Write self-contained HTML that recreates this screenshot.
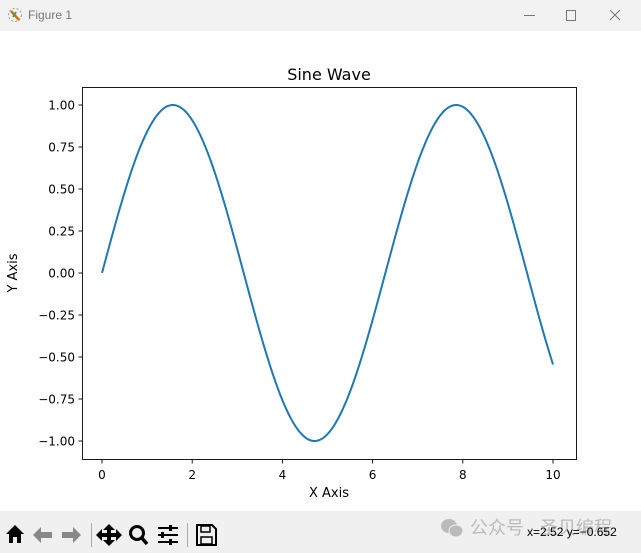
<!DOCTYPE html>
<html><head><meta charset="utf-8"><style>
body{margin:0;width:641px;height:553px;overflow:hidden;background:#fff;font-family:"DejaVu Sans","Liberation Sans",sans-serif;position:relative}
#tb{position:absolute;left:0;top:0;width:641px;height:31px;background:#f2f2f2}
#bot{position:absolute;left:0;top:511px;width:641px;height:42px;background:#f0f0f0}
.t{position:absolute;font-size:12px;color:#222;white-space:nowrap}
</style></head><body>
<div id="tb">
<svg style="position:absolute;left:7px;top:7px" width="16" height="16"><circle cx="8" cy="8" r="6.5" fill="none" stroke="#999" stroke-dasharray="2 2"/><path d="M4 4 L12 13" stroke="#e66b00" stroke-width="2.5"/><path d="M6 10 L9 5" stroke="#2a7" stroke-width="2"/></svg>
<div class="t" style="left:28px;top:8px;color:#777;font-family:'Liberation Sans',sans-serif;font-size:12px">Figure 1</div>
<div style="position:absolute;left:524px;top:15px;width:11px;height:1px;background:#777"></div>
<div style="position:absolute;left:566px;top:10px;width:8px;height:9px;border:1px solid #777"></div>
<svg style="position:absolute;left:609px;top:9px" width="12" height="12"><path d="M1 1L11 11M11 1L1 11" stroke="#777"/></svg>
</div>
<svg style="position:absolute;left:0;top:0" width="641" height="511" font-family="DejaVu Sans, sans-serif" font-size="12">
<rect x="82.5" y="87.5" width="494" height="372" fill="none" stroke="#000" stroke-width="0.9"/>
<text x="329" y="80" font-size="16" text-anchor="middle">Sine Wave</text>
<g id="xt"></g><g id="yt"></g>
<text x="329" y="497" font-size="13" text-anchor="middle">X Axis</text>
<text transform="translate(17,273) rotate(-90)" font-size="13" text-anchor="middle">Y Axis</text>
<polyline id="sw" fill="none" stroke="#1f77b4" stroke-width="2"/>
</svg>
<div id="bot">
<svg style="position:absolute;left:4px;top:10px" width="215" height="26">
<path d="M2 13 L11 4 L20 13 L17 13 L17 22 L13 22 L13 16 L9 16 L9 22 L5 22 L5 13Z" fill="#000"/>
<path d="M29 14 L37 6 L37 11 L48 11 L48 17 L37 17 L37 22Z" fill="#888"/>
<path d="M77 14 L69 6 L69 11 L58 11 L58 17 L69 17 L69 22Z" fill="#888"/>
<rect x="87" y="2" width="1" height="24" fill="#aaa"/>
<path d="M105 3 L99 9 L103 9 L103 12 L98 12 L98 8 L92 14 L98 20 L98 16 L103 16 L103 19 L99 19 L105 25 L111 19 L107 19 L107 16 L112 16 L112 20 L118 14 L112 8 L112 12 L107 12 L107 9 L111 9Z" fill="#000"/>
<circle cx="133" cy="12" r="6.5" fill="none" stroke="#000" stroke-width="3"/><path d="M137 16 L143 23" stroke="#000" stroke-width="3.5"/>
<path d="M154 7H174M154 14H174M154 21H174" stroke="#000" stroke-width="2"/><rect x="165" y="4" width="3" height="6"/><rect x="157" y="11" width="3" height="6"/><rect x="165" y="18" width="3" height="6"/>
<rect x="183" y="2" width="1" height="24" fill="#aaa"/>
<path d="M193 4 H208 L212 8 V24 H193Z" fill="none" stroke="#000" stroke-width="2"/><rect x="197" y="5" width="9" height="6" fill="none" stroke="#000" stroke-width="1.5"/><rect x="197" y="16" width="11" height="7" fill="none" stroke="#000" stroke-width="1.5"/>
</svg>
<svg style="position:absolute;left:440px;top:6px" width="24" height="22"><ellipse cx="9" cy="9" rx="8" ry="7" fill="#bbb"/><ellipse cx="16" cy="14" rx="7" ry="6" fill="#bbb" stroke="#f0f0f0"/></svg>
<div class="t" style="left:470px;top:3px;font-size:18px;color:#bbb;font-family:'Liberation Sans','Noto Sans CJK SC',sans-serif">公众号 · 圣贝编程</div>
<div class="t" style="left:527px;top:14px;font-family:'Liberation Sans',sans-serif;color:#000">x=2.52 y=−0.652</div>
</div>
<script>
function X(v){return 102+v*45.1}function Y(v){return 273-v*168}
var p=[];for(var i=0;i<=400;i++){var x=i/40;p.push(X(x).toFixed(2)+","+Y(Math.sin(x)).toFixed(2))}
document.getElementById("sw").setAttribute("points",p.join(" "));
var xt=document.getElementById("xt");
[0,2,4,6,8,10].forEach(function(v){var x=X(v);xt.innerHTML+='<line x1="'+x+'" x2="'+x+'" y1="459.5" y2="463.5" stroke="#000" stroke-width="0.9"/><text x="'+x+'" y="479" text-anchor="middle">'+v+'</text>'});
var yt=document.getElementById("yt");
[1,0.75,0.5,0.25,0,-0.25,-0.5,-0.75,-1].forEach(function(v){var y=Y(v);var s=(v<0?"\u2212":"")+Math.abs(v).toFixed(2);yt.innerHTML+='<line x1="78.5" x2="82.5" y1="'+y+'" y2="'+y+'" stroke="#000" stroke-width="0.9"/><text x="75" y="'+(y+4.5)+'" text-anchor="end">'+s+'</text>'});
</script>
</body></html>
